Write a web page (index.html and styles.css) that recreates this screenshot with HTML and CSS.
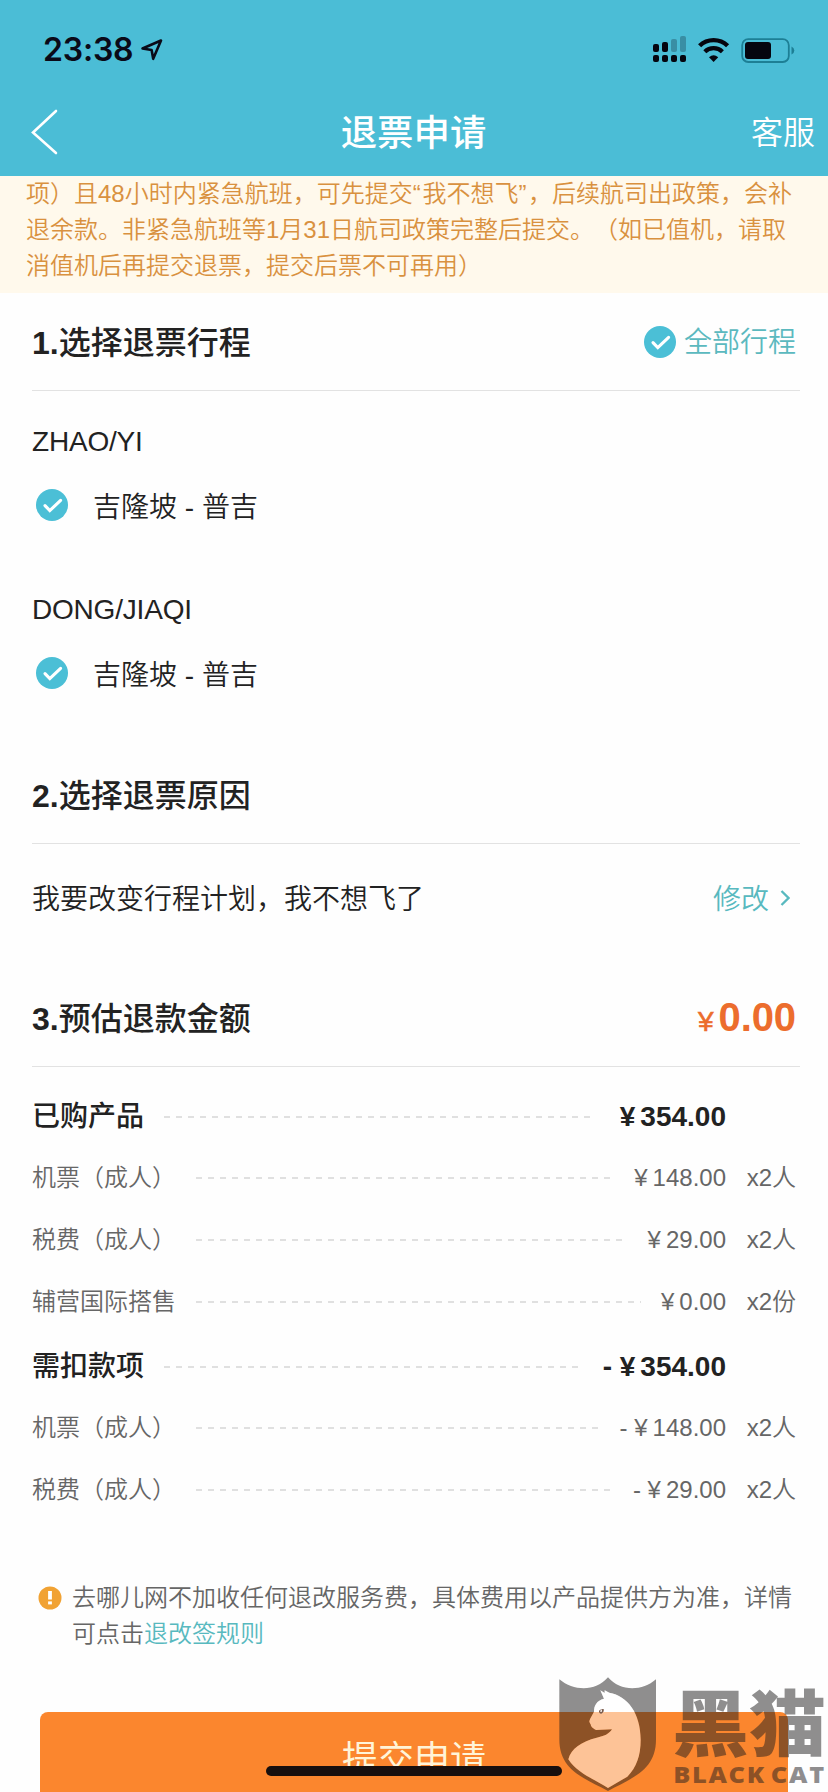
FILE: index.html
```html
<!DOCTYPE html>
<html lang="zh-CN">
<head>
<meta charset="utf-8">
<title>退票申请</title>
<link rel="stylesheet" href="styles.css">
</head>
<body>
<svg class="defs" aria-hidden="true">
  <symbol id="check" viewBox="0 0 32 32">
    <circle cx="16" cy="16" r="16" fill="#4bbfd6"/>
    <path d="M9 16.600 13.800 21.600 24.600 11.300" fill="none" stroke="#fff" stroke-width="3.100" stroke-linecap="round" stroke-linejoin="miter"/>
  </symbol>
</svg>
<div class="screen">
  <header class="top">
    <div class="status">
      <span class="time">23:38</span>
      <svg class="loc" width="24" height="24" viewBox="0 0 24 24"><path d="M2.500 10.500 21 2.500 13.200 20.800 11.600 12Z" fill="none" stroke="#0a0a18" stroke-width="2.600" stroke-linejoin="round"/></svg>
      <svg class="signals" width="142" height="28" viewBox="0 0 142 28" fill="#05050f">
        <g>
          <rect x="0" y="8" width="6" height="8" rx="2"/><rect x="9" y="6" width="6" height="10" rx="2"/>
          <rect x="18" y="3" width="6" height="13" rx="2" opacity=".25"/><rect x="27" y="0" width="6" height="16" rx="2" opacity=".25"/>
          <rect x="0" y="19" width="6" height="7" rx="2"/><rect x="9" y="19" width="6" height="7" rx="2"/><rect x="18" y="19" width="6" height="7" rx="2"/><rect x="27" y="19" width="6" height="7" rx="2"/>
        </g>
        <g fill="none" stroke="#05050f">
          <path d="M46.600 9.800a20 20 0 0 1 28 0" stroke-width="4.400"/>
          <path d="M51.800 15.800a12.600 12.600 0 0 1 17.600 0" stroke-width="4.200"/>
        </g>
        <path d="M56 21.200Q60.600 17.400 65.200 21.200L60.600 26Z"/>
        <rect x="89.200" y="3.200" width="46.600" height="22.800" rx="6" fill="none" stroke="#1d7f95" stroke-width="1.800"/>
        <rect x="92" y="6" width="26" height="17" rx="3"/>
        <path d="M138.500 10.500q2.800 1.300 2.800 4t-2.800 4z" fill="#1d7f95"/>
      </svg>
    </div>
    <nav class="nav">
      <svg class="back" width="28" height="46" viewBox="0 0 28 46"><path d="M25 2 2 23.500 25 44" fill="none" stroke="#fff" stroke-width="2.600" stroke-linecap="round"/></svg>
      <h1 class="title">退票申请</h1>
      <span class="service">客服</span>
    </nav>
  </header>

  <div class="notice">项）且48小时内紧急航班，可先提交<q>“</q>我不想飞<q>”</q>，后续航司出政策，会补<br>退余款。非紧急航班等1月31日航司政策完整后提交。（如已值机，请取<br>消值机后再提交退票，提交后票不可再用）</div>

  <main class="content">
    <section class="trip">
      <div class="head">
        <h2><b>1.</b>选择退票行程</h2>
        <span class="all"><svg class="tick"><use href="#check"/></svg><span>全部行程</span></span>
      </div>
      <div class="passenger">
        <div class="name">ZHAO/YI</div>
        <div class="route"><svg class="tick"><use href="#check"/></svg><span>吉隆坡 - 普吉</span></div>
      </div>
      <div class="passenger">
        <div class="name">DONG/JIAQI</div>
        <div class="route"><svg class="tick"><use href="#check"/></svg><span>吉隆坡 - 普吉</span></div>
      </div>
    </section>

    <section class="reason">
      <div class="head"><h2><b>2.</b>选择退票原因</h2></div>
      <div class="reason-row">
        <span>我要改变行程计划，我不想飞了</span>
        <span class="edit">修改<svg width="10" height="18" viewBox="0 0 10 18"><path d="M1.500 2 8.500 9 1.500 16" fill="none" stroke="#58b9bf" stroke-width="2.300"/></svg></span>
      </div>
    </section>

    <section class="refund">
      <div class="head"><h2><b>3.</b>预估退款金额</h2><span class="total"><i>¥</i>0.00</span></div>
      <div class="lines">
        <div class="line sum first"><span>已购产品</span><span class="dash"></span><span class="amt"><i>¥</i>354.00</span><span class="qty"></span></div>
        <div class="line"><span>机票（成人）</span><span class="dash"></span><span class="amt"><i>¥</i>148.00</span><span class="qty">x2人</span></div>
        <div class="line"><span>税费（成人）</span><span class="dash"></span><span class="amt"><i>¥</i>29.00</span><span class="qty">x2人</span></div>
        <div class="line"><span>辅营国际搭售</span><span class="dash"></span><span class="amt"><i>¥</i>0.00</span><span class="qty">x2份</span></div>
        <div class="line sum second"><span>需扣款项</span><span class="dash"></span><span class="amt">- <i>¥</i>354.00</span><span class="qty"></span></div>
        <div class="line"><span>机票（成人）</span><span class="dash"></span><span class="amt">- <i>¥</i>148.00</span><span class="qty">x2人</span></div>
        <div class="line"><span>税费（成人）</span><span class="dash"></span><span class="amt">- <i>¥</i>29.00</span><span class="qty">x2人</span></div>
      </div>
    </section>

    <div class="tip">
      <svg width="24" height="24" viewBox="0 0 24 24"><circle cx="12" cy="12" r="11.500" fill="#f1a233"/><path d="M12 5v8.500" stroke="#fff" stroke-width="3.800"/><rect x="10.100" y="15.400" width="3.800" height="3" fill="#fff"/></svg>
      <p>去哪儿网不加收任何退改服务费，具体费用以产品提供方为准，详情<br>可点击<a class="rule">退改签规则</a></p>
    </div>
    <button class="submit">提交申请</button>
  </main>

  <div class="home"></div>
  <div class="mark">
    <svg width="104" height="118" viewBox="48 42 312 354">
      <path fill="#201d1e" fill-opacity=".5" fill-rule="evenodd" d="M58 58C102 95 168 95 204 52C240 95 306 95 348 58V238C348 330 280 352 204 393C128 352 58 330 58 238ZM181 91L192 116C170 122 162 136 162 155C156 168 150 174 148 184C149 191 153 192 153 197C156 204 163 206 168 210L216 208C207 222 193 229 170 233C125 244 93 266 85 298C112 340 158 355 204 384L262 350C290 322 302 286 302 240C302 158 262 108 208 98L194 91V99Z"/>
      <path fill="#fff" fill-opacity=".5" d="M181 91L192 116C170 122 162 136 162 155C156 168 150 174 148 184C149 191 153 192 153 197C156 204 163 206 168 210L216 208C207 222 193 229 170 233C125 244 93 266 85 298C112 340 158 355 204 384L262 350C290 322 302 286 302 240C302 158 262 108 208 98L194 91V99Z"/>
      <path d="M177 152q5-6 14-5q2 10-7 14q-8-1-7-9z" fill="#7b5b4c"/><path d="M182 149l4 0-1 7-4 0z" fill="#fff"/>
    </svg>
    <div class="words"><span class="cn">黑猫</span><span class="en">BLACK CAT</span></div>
  </div>
</div>
</body>
</html>
```
FILE: styles.css
```css
* { box-sizing: border-box; }
body { margin: 0; background: #fefefe; }
h1, h2, p { margin: 0; }
i { font-style: normal; }
b { font-weight: 700; }
.defs { position: absolute; width: 0; height: 0; }
.screen {
  position: relative;
  width: 828px;
  height: 1792px;
  overflow: hidden;
  background: #fefefe;
  color: #222;
  font-family: "Liberation Sans", "Noto Sans CJK SC", sans-serif;
  font-size: 28px;
  font-weight: 350;
  text-spacing-trim: space-all;
}

.top { height: 176px; background: #4bbdd6; }
.status { display: flex; height: 88px; padding: 36px 33px 0 43px; }
.time { font: 600 32px/28px Inter, sans-serif; color: #0a0a18; width: 97px; letter-spacing: -.2px; }
.loc { margin-top: 2px; }
.signals { margin-left: auto; }
.nav {
  display: grid;
  grid-template-columns: 150px 1fr 150px;
  align-items: center;
  height: 88px;
  padding: 0 13px 0 31px;
  color: #fff;
}
.title { text-align: center; font-size: 36.400px; font-weight: 500; line-height: 50px; padding: 4px 19px 0 0; }
.service { text-align: right; font-size: 32px; line-height: 50px; padding-top: 2px; }

.notice {
  height: 117px;
  padding-left: 26px;
  background: #fff9ec;
  color: #d9913f;
  font-size: 24px;
  line-height: 36px;
  white-space: nowrap;
}
.notice q { quotes: none; letter-spacing: 1.700px; }

.content { padding: 0 28px 0 32px; }
.head {
  display: flex;
  justify-content: space-between;
  align-items: center;
  height: 98px;
  padding-right: 4px;
  border-bottom: 1px solid #e2e2e2;
}
h2 { font-size: 32px; line-height: 40px; font-weight: 500; padding-top: 2px; }
.all { display: flex; align-items: center; gap: 8px; line-height: 40px; color: #5bb9bf; }
.all span { padding-top: 3px; }
.tick { width: 32px; height: 32px; flex: none; }
.passenger { height: 168px; padding-top: 31px; }
.name { height: 40px; line-height: 40px; letter-spacing: -.2px; }
.route { display: flex; align-items: center; gap: 25px; height: 40px; margin-top: 23px; padding-left: 4px; line-height: 40px; }
.route span { padding-top: 5px; }

.reason { margin-top: 19px; }
.reason-row { display: flex; justify-content: space-between; align-items: center; height: 108px; padding: 3px 10px 0 0; line-height: 40px; }
.edit { display: flex; align-items: center; gap: 11px; color: #58b9bf; }
.edit svg { margin-bottom: 3px; }

.refund { margin-top: 17px; }
.total { font-weight: 700; font-size: 40px; color: #ec6d2d; letter-spacing: -.1px; }
.total i { font-size: 28px; font-weight: 400; margin-right: 5px; -webkit-text-stroke: .6px #ec6d2d; }
.lines { padding-top: 20px; }
.line { display: flex; height: 62px; font-size: 24px; line-height: 62px; color: #666; white-space: nowrap; }
.line.sum { height: 60px; line-height: 60px; font-size: 28px; font-weight: 500; color: #222; }
.sum .amt { font-weight: 700; }
.line.second { margin-top: 4px; }
.dash {
  flex: 1;
  align-self: center;
  height: 2px;
  margin: 0 20px;
  background: repeating-linear-gradient(90deg, #e0e0e0 0 6px, transparent 6px 12px);
}
.first .dash { margin-right: 26px; }
.amt i { margin-right: 5px; }
.qty { width: 74px; padding-right: 4px; text-align: right; }

.tip { display: flex; gap: 10px; margin-top: 59px; padding-left: 6px; font-size: 24px; line-height: 36px; color: #666; white-space: nowrap; }
.tip svg { margin-top: 6px; }
.rule { color: #58b9bf; }
.submit {
  display: block;
  width: 748px;
  height: 96px;
  margin: 60px 0 0 8px;
  padding: 0;
  border: 0;
  border-radius: 8px;
  background: #fb862e;
  color: #fff4d8;
  font: 400 36px/88px "Liberation Sans", "Noto Sans CJK SC", sans-serif;
}

.home { position: absolute; left: 266px; top: 1766px; width: 296px; height: 10px; border-radius: 5px; background: #170f0e; }
.mark { position: absolute; left: 556px; top: 1674px; display: flex; gap: 12px; }
.words { display: flex; flex-direction: column; color: rgba(32, 29, 30, .5); white-space: nowrap; }
.cn { font: 900 72px/90px "Noto Sans CJK SC", sans-serif; transform: scaleX(1.070); transform-origin: left; }
.en { font: 800 22.500px/22px "Open Sans", sans-serif; letter-spacing: 1.500px; word-spacing: -3px; padding-left: 1px; transform: scaleX(1.130); transform-origin: left; }
```
